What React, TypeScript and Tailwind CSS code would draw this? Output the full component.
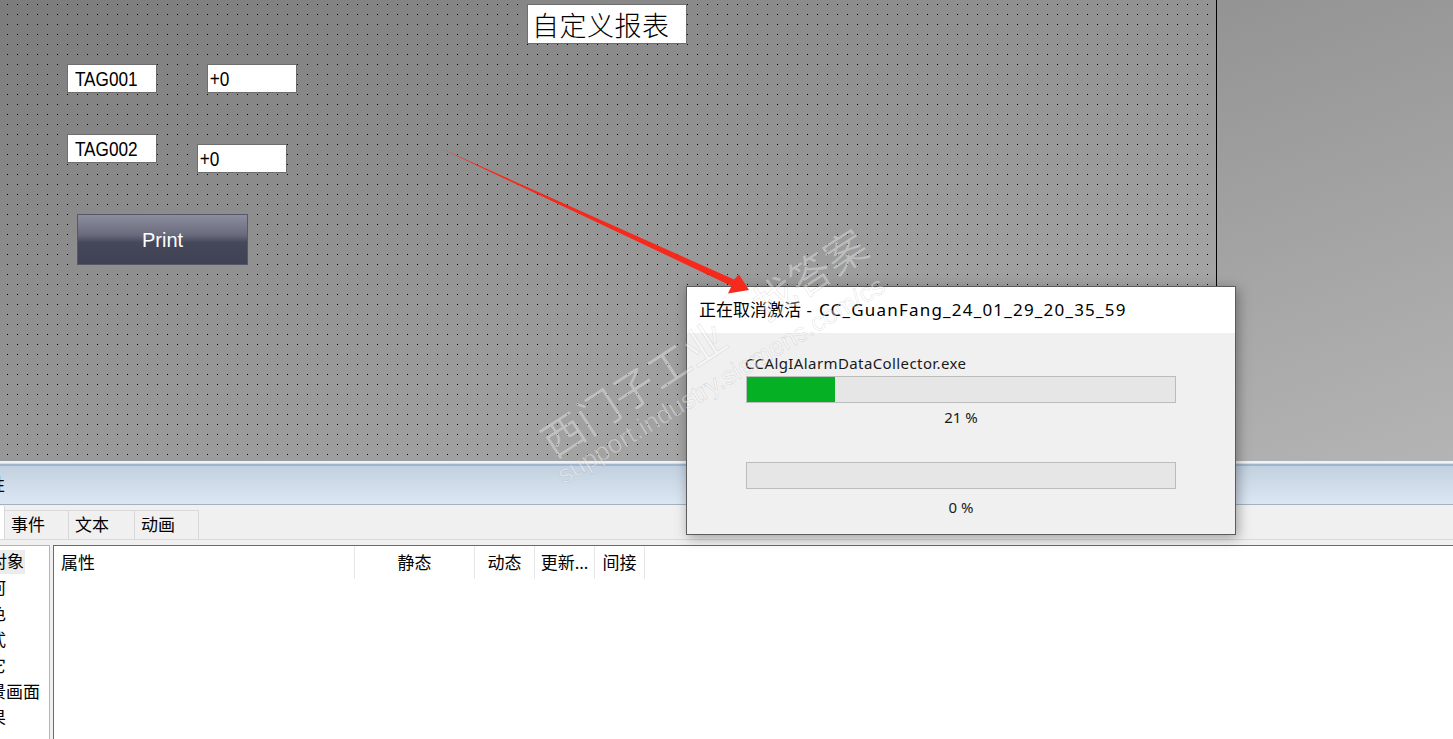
import React from 'react';

const treeItems = [
  { label: '对象', ml: 'ml-[-10px]', sel: true },
  { label: '几何', ml: 'ml-[-28px]', sel: false },
  { label: '颜色', ml: 'ml-[-28px]', sel: false },
  { label: '样式', ml: 'ml-[-28px]', sel: false },
  { label: '其它', ml: 'ml-[-28px]', sel: false },
  { label: '背景画面', ml: 'ml-[-28px]', sel: false },
  { label: '效果', ml: 'ml-[-28px]', sel: false },
];

const columns = [
  { label: '属性', w: 'w-[301px] justify-start pl-[7px]' },
  { label: '静态', w: 'w-[120px] justify-center' },
  { label: '动态', w: 'w-[60px] justify-center' },
  { label: '更新...', w: 'w-[60px] justify-center' },
  { label: '间接', w: 'w-[50px] justify-center' },
];

const tabs = [
  { label: '事件', w: 'w-[64px]' },
  { label: '文本', w: 'w-[66px]' },
  { label: '动画', w: 'w-[64px]' },
];

function ProgressBar({ pct }: { pct: number }) {
  return (
    <div className="w-[430px] h-[27px] border border-[#bcbcbc] bg-[#e6e6e6]">
      <div className="h-full bg-[#06b025]" style={{ width: `${pct}%` }} />
    </div>
  );
}

function CanvasBox({ left, top, w, children }: { left: string; top: string; w: string; children: React.ReactNode }) {
  return (
    <div className={`absolute ${left} ${top} ${w} h-[29px] bg-white border border-[#6e6e6e] flex items-center overflow-hidden`}>
      {children}
    </div>
  );
}

export default function App() {
  return (
    <div className="relative w-[1453px] h-[739px] overflow-hidden flex flex-col bg-white text-black font-['Microsoft_YaHei','Noto_Sans','Noto_Sans_CJK_SC',sans-serif]">
      {/* editor area */}
      <div className="h-[461px] flex bg-[linear-gradient(to_bottom_right,#7c7c7c,#b4b4b4)] shrink-0">
        <div className="relative w-[1217px] h-full border-r border-black">
          <svg className="absolute inset-0 w-full h-full" aria-hidden>
            <defs>
              <pattern id="dots" width="10" height="10" patternUnits="userSpaceOnUse">
                <rect x="7" y="4" width="1" height="1" fill="#000" />
              </pattern>
            </defs>
            <rect width="100%" height="100%" fill="url(#dots)" />
          </svg>

          <div className="absolute left-[527px] top-[4px] w-[160px] h-[40px] bg-white border border-[#6e6e6e] pl-[4px] flex items-center text-[27px] leading-none font-light tracking-[0.5px] font-['Noto_Sans_CJK_SC',serif]">
            自定义报表
          </div>

          <CanvasBox left="left-[67px]" top="top-[64px]" w="w-[90px]">
            <span className="inline-block origin-left scale-x-[0.86] pl-[8px] text-[20px] font-['Liberation_Sans',Arial,sans-serif]">TAG001</span>
          </CanvasBox>
          <CanvasBox left="left-[207px]" top="top-[64px]" w="w-[90px]">
            <span className="inline-block origin-left scale-x-[0.86] pl-[2px] text-[20px] font-['Liberation_Sans',Arial,sans-serif]">+0</span>
          </CanvasBox>
          <CanvasBox left="left-[67px]" top="top-[134px]" w="w-[90px]">
            <span className="inline-block origin-left scale-x-[0.86] pl-[8px] text-[20px] font-['Liberation_Sans',Arial,sans-serif]">TAG002</span>
          </CanvasBox>
          <CanvasBox left="left-[197px]" top="top-[144px]" w="w-[90px]">
            <span className="inline-block origin-left scale-x-[0.86] pl-[2px] text-[20px] font-['Liberation_Sans',Arial,sans-serif]">+0</span>
          </CanvasBox>

          <div className="absolute left-[77px] top-[214px] w-[171px] h-[51px] border border-[#55576a] bg-[linear-gradient(to_bottom,#8c8e9e_0%,#6a6c7d_40%,#53556a_50%,#45475a_56%,#404254_100%)] flex items-center justify-center">
            <span className="text-white text-[20px] font-['Liberation_Sans',Arial,sans-serif]">Print</span>
          </div>
        </div>
        <div className="flex-1" />
      </div>

      {/* splitter */}
      <div className="h-[5px] shrink-0 flex flex-col">
        <div className="h-[2px] bg-[#eef3f8]" />
        <div className="h-[1px] bg-[#d3dee9]" />
        <div className="h-[2px] bg-[#9fb5cb]" />
      </div>

      {/* properties title strip */}
      <div className="h-[39px] shrink-0 flex items-center overflow-hidden bg-[linear-gradient(to_bottom,#c2d0df,#dce7f3)] border-b border-[#a5b1bd]">
        <span className="ml-[-29px] text-[17px]">属性</span>
      </div>

      {/* tabs */}
      <div className="h-[35px] shrink-0 flex items-end bg-[#f0f0f0] border-b border-[#d9d9d9]">
        <div className="w-[5px] h-[33px] bg-white border-r border-[#d9d9d9]" />
        {tabs.map((t) => (
          <div key={t.label} className={`${t.w} h-[29px] border-t border-r border-[#d9d9d9] pl-[6px] flex items-center text-[17px]`}>
            {t.label}
          </div>
        ))}
      </div>

      {/* body */}
      <div className="flex-1 flex bg-[#f0f0f0] pt-[5px]">
        <div className="w-[50px] bg-white border-t border-r border-[#b4b4b4] overflow-hidden pt-[3px]">
          {treeItems.map((it) => (
            <div key={it.label} className="h-[26px] flex items-center">
              <span className={`${it.ml} whitespace-nowrap text-[17px] leading-[24px] pr-[1px] ${it.sel ? 'bg-[#ececec]' : ''}`}>
                {it.label}
              </span>
            </div>
          ))}
        </div>
        <div className="w-[3px]" />
        <div className="flex-1 bg-white border-t border-l border-[#6a6a6a]">
          <div className="h-[33px] flex">
            {columns.map((c) => (
              <div key={c.label} className={`${c.w} h-full flex items-center border-r border-[#e6e6e6] text-[17px] whitespace-nowrap`}>
                {c.label}
              </div>
            ))}
          </div>
        </div>
      </div>

      {/* deactivation dialog */}
      <div className="absolute left-[686px] top-[286px] w-[550px] h-[249px] border border-[#5c5c5c] bg-[#f0f0f0] shadow-[2px_3px_12px_rgba(0,0,0,0.35)] flex flex-col">
        <div className="h-[46px] bg-white pl-[12px] flex items-center text-[17px] whitespace-nowrap">
          正在取消激活<span className="tracking-[1.2px]">&nbsp;- CC_GuanFang_24_01_29_20_35_59</span>
        </div>
        <div className="pl-[59px] flex flex-col text-[15px] text-[#1a1a1a]">
          <div className="mt-[20px] leading-[20px] ml-[-1px] tracking-[0.4px]">CCAlgIAlarmDataCollector.exe</div>
          <div className="mt-[3px]">
            <ProgressBar pct={20.5} />
          </div>
          <div className="w-[430px] mt-[4px] leading-[20px] text-center">21 %</div>
          <div className="mt-[35px]">
            <ProgressBar pct={0} />
          </div>
          <div className="w-[430px] mt-[8px] leading-[20px] text-center">0 %</div>
        </div>
      </div>

      {/* red annotation arrow */}
      <svg className="absolute inset-0 w-[1453px] h-[739px] pointer-events-none" aria-hidden>
        <polygon
          points="440,148 734,279.5 739,274.5 749,290 728,293.5 731.5,286"
          fill="#f62a1c"
        />
      </svg>

      {/* watermark */}
      <div className="absolute left-[556px] top-[420px] origin-bottom-left -rotate-[33deg] whitespace-nowrap pointer-events-none text-[42px] leading-none text-white/35 [-webkit-text-stroke:0.6px_rgba(90,90,90,0.18)] font-['Noto_Sans_CJK_SC',sans-serif]">
        西门子工业　找答案
      </div>
      <div className="absolute left-[566px] top-[462px] origin-bottom-left -rotate-[31deg] whitespace-nowrap pointer-events-none text-[26px] leading-none text-white/35 [-webkit-text-stroke:0.6px_rgba(90,90,90,0.18)] font-['Liberation_Sans',Arial,sans-serif]">
        support.industry.siemens.com/cs
      </div>
    </div>
  );
}
